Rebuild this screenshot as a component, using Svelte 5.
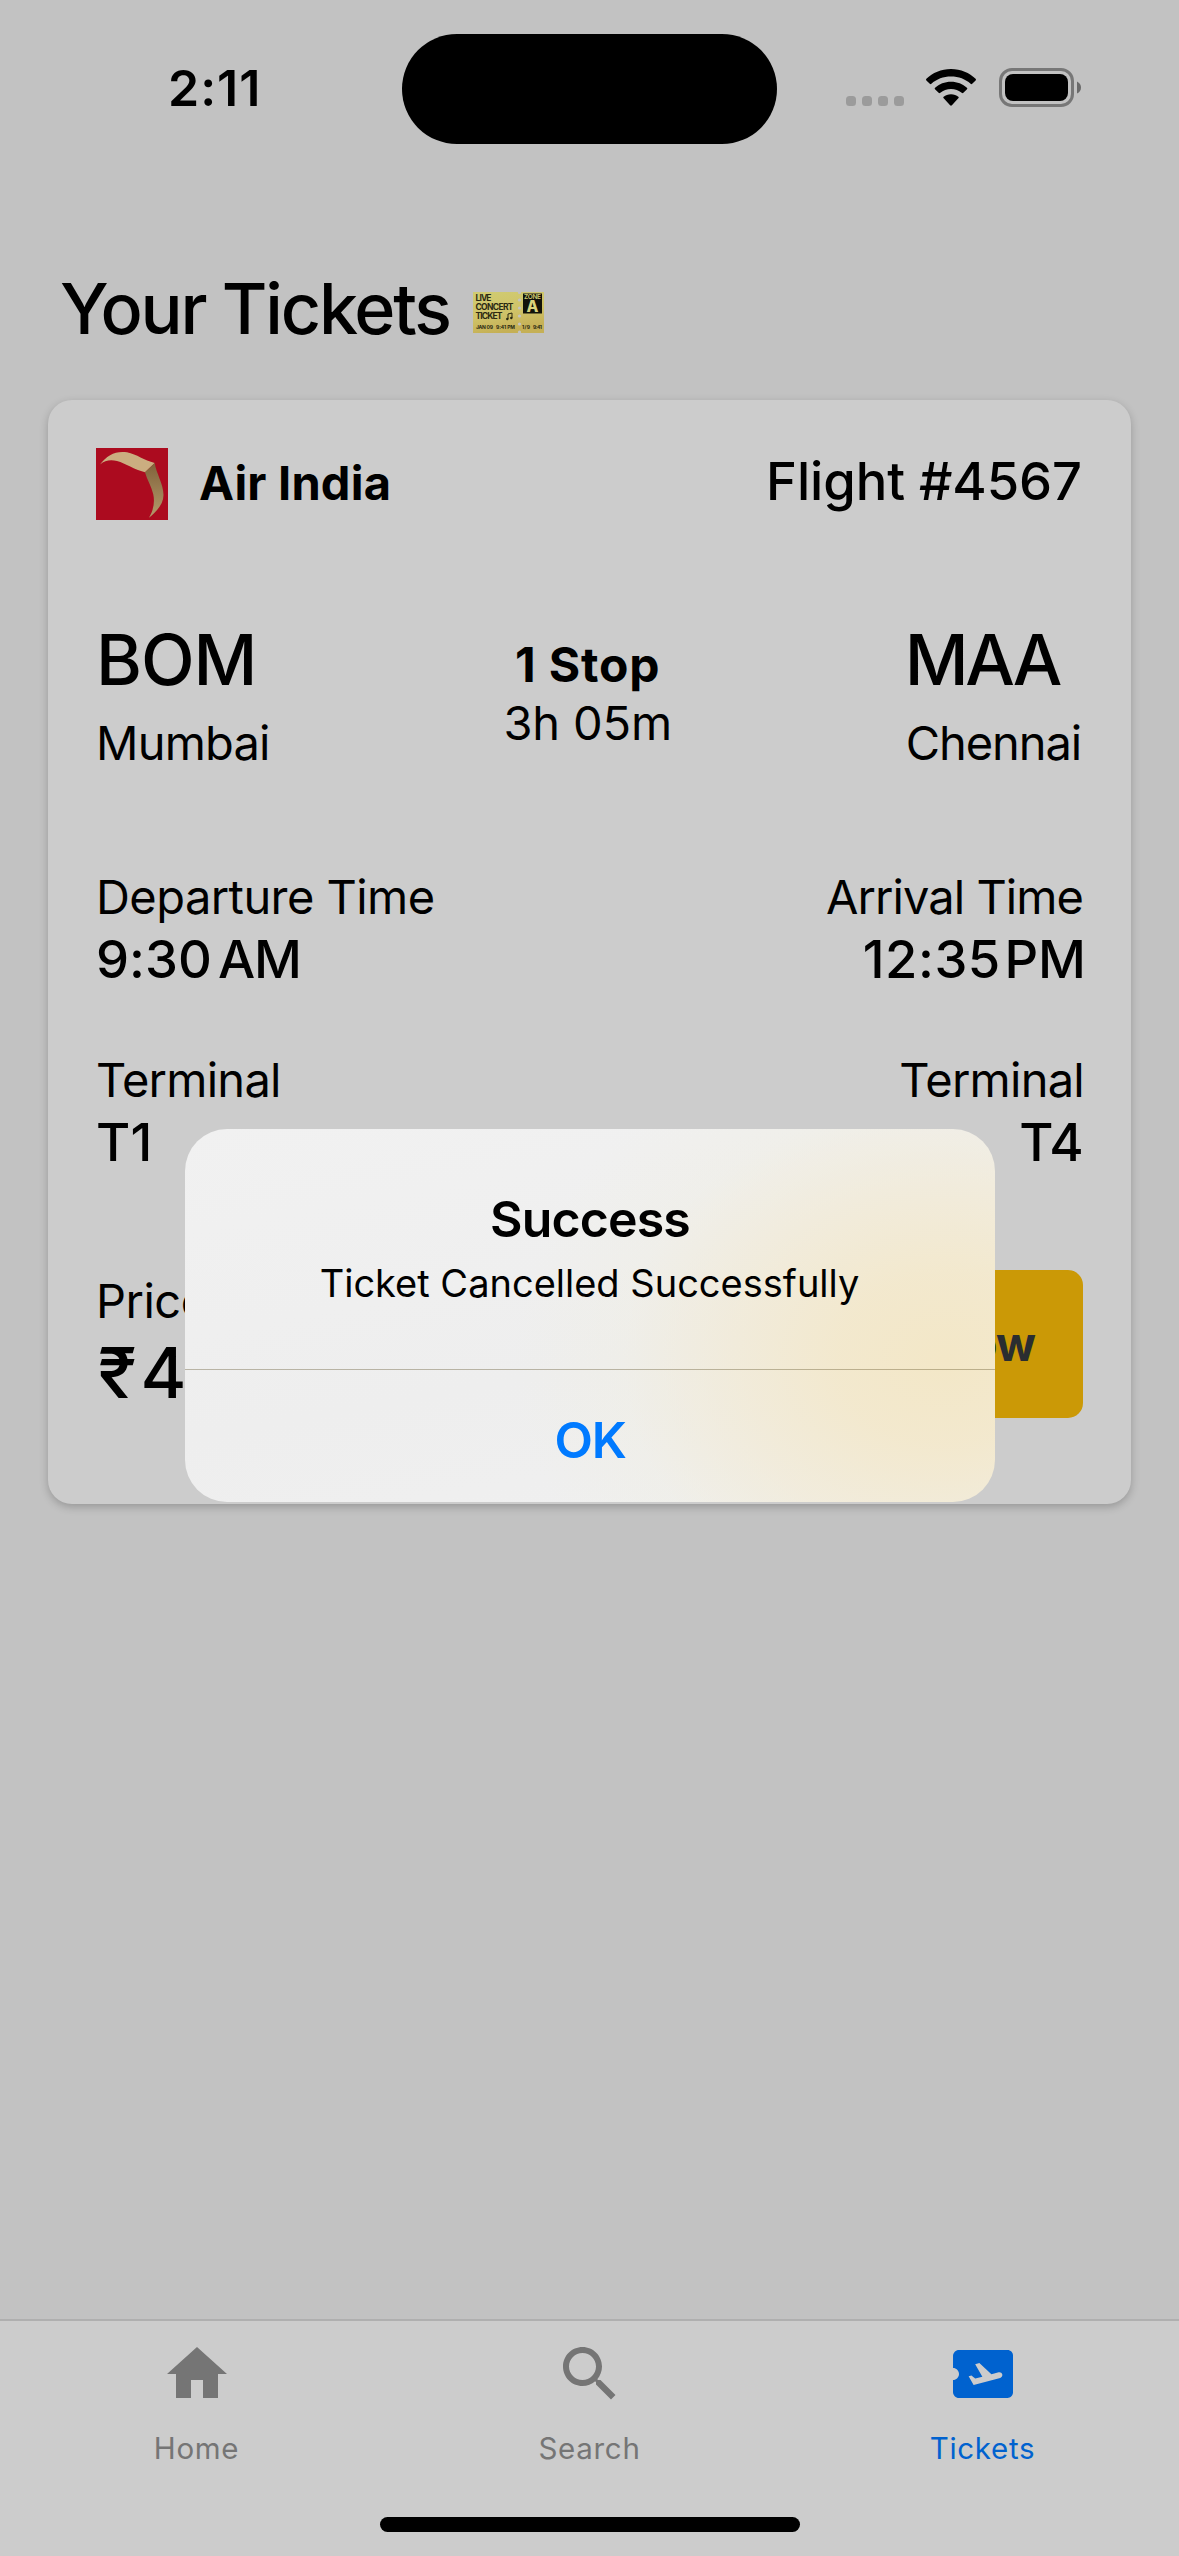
<script>
  const tabs = [
    {
      id: 'home',
      label: 'Home',
      path: 'M10 20v-6h4v6h5v-8h3L12 3 2 12h3v8z'
    },
    {
      id: 'search',
      label: 'Search',
      path: 'M15.5 14h-.79l-.28-.27C15.41 12.59 16 11.11 16 9.5 16 5.91 13.09 3 9.5 3S3 5.91 3 9.5 5.91 16 9.5 16c1.61 0 3.09-.59 4.23-1.57l.27.28v.79l5 4.99L20.49 19l-4.99-5zm-6 0C7.01 14 5 11.99 5 9.5S7.01 5 9.5 5 14 7.01 14 9.5 11.99 14 9.5 14z'
    },
    {
      id: 'tickets',
      label: 'Tickets',
      path: 'M20.19 4H4c-1.1 0-1.99.9-1.99 2v4c1.1 0 1.99.9 1.99 2s-.89 2-2 2v4c0 1.1.9 2 2 2h16.19c1 0 1.81-.82 1.81-1.82V5.82C22 4.82 21.19 4 20.19 4zM17.73 13.3l-8.86 2.36-1.66-2.88.93-.25 1.26.99 2.39-.64-2.4-4.16 1.4-.38 4.01 3.74 2.44-.65c.51-.14 1.04.17 1.18.68.13.51-.17 1.04-.69 1.19z'
    }
  ];
  let active = $state('tickets');
</script>

<div class="screen">
  <header class="status">
    <div class="clock">2:11</div>
    <div class="island"></div>
    <div class="indicators">
      <div class="dots"><i></i><i></i><i></i><i></i></div>
      <svg class="wifi" viewBox="0 0 50 37">
        <path d="M25 0C34.800 0 43.500 3.800 49.600 9.800Q50.400 10.600 49.600 11.400L46.200 14.800Q45.400 15.600 44.600 14.800C39.500 10 32.600 7.500 25 7.500S10.500 10 5.400 14.800Q4.600 15.600 3.800 14.800L.400 11.400Q-.400 10.600 .400 9.800C6.500 3.800 15.200 0 25 0Z" />
        <path d="M25 12.700C31.300 12.700 36.800 15 40.900 18.700Q41.800 19.500 41 20.300L37.400 23.800Q36.600 24.600 35.700 23.800C32.800 21.300 29.100 20 25 20S17.200 21.300 14.300 23.800Q13.400 24.600 12.600 23.800L9 20.300Q8.200 19.500 9.100 18.700C13.200 15 18.700 12.700 25 12.700Z" />
        <path d="M25 25.300C28 25.300 30.500 26.200 32.300 27.700Q33.100 28.400 32.300 29.200L25.900 36.300Q25 37.200 24.100 36.300L17.700 29.200Q16.900 28.400 17.700 27.700C19.500 26.200 22 25.300 25 25.300Z" />
      </svg>
      <svg class="battery" viewBox="0 0 82 39">
        <rect x="1.500" y="1.500" width="72" height="36" rx="11.500" fill="none" stroke="#777" stroke-width="3" />
        <rect x="6" y="6" width="63" height="27" rx="8" />
        <path d="M78 13.500Q82 15.500 82 19.500T78 25.500Z" fill="#6a6a6a" />
      </svg>
    </div>
  </header>

  <main>
    <h1>
      <span>Your Tickets</span>
      <svg class="emoji" viewBox="0 0 71 41">
        <defs>
          <linearGradient id="paper" x1="0" y1="0" x2="0.300" y2="1">
            <stop offset="0" stop-color="#d0cc72" />
            <stop offset="0.600" stop-color="#cfc268" />
            <stop offset="1" stop-color="#c5b056" />
          </linearGradient>
        </defs>
        <rect width="71" height="41" fill="url(#paper)" />
        <g fill="#c2c2c2">
          <circle cx="46.500" cy="0.500" r="1.600" /><circle cx="46.500" cy="8" r="1.600" />
          <circle cx="46.500" cy="16" r="1.600" /><circle cx="46.500" cy="24" r="1.600" />
          <circle cx="46.500" cy="32" r="1.600" /><circle cx="46.500" cy="40" r="1.600" />
        </g>
        <rect x="50" y="1.500" width="19" height="20" fill="#12120a" />
        <g class="print">
          <text x="2.500" y="8.800" textLength="16">LIVE</text>
          <text x="2.500" y="18" textLength="38">CONCERT</text>
          <text x="2.500" y="27.200" textLength="27">TICKET</text>
          <text class="fine" x="3" y="37" textLength="17">JAN 09</text>
          <text class="fine" x="23" y="37" textLength="19">9:41 PM</text>
          <text class="fine" x="49" y="37" textLength="8">1/9</text>
          <text class="fine" x="60" y="37" textLength="9">9:41</text>
        </g>
        <path d="M35 27V22l4-1v5" fill="none" stroke="#2a2912" />
        <circle cx="34.300" cy="27" r="1.200" fill="#2a2912" /><circle cx="38.300" cy="26" r="1.200" fill="#2a2912" />
        <text class="zone" x="51" y="7.300" textLength="17">ZONE</text>
        <text class="letter" x="59.500" y="19.800" text-anchor="middle">A</text>
      </svg>
    </h1>

    <article class="card">
      <div class="row airline">
        <div class="brand">
          <svg class="logo" viewBox="0 0 72 72">
            <defs>
              <linearGradient id="fold" x1="0" y1="0" x2="0" y2="1">
                <stop offset="0" stop-color="#80623a" />
                <stop offset="1" stop-color="#b59a6b" />
              </linearGradient>
            </defs>
            <rect width="72" height="72" fill="#ac0b1f" />
            <path d="M4 16.500C11 7 20 2.500 31 4.300C41 6.300 48 12.500 58.700 15L49 24.200C38 21.500 30 15.500 21 13C14 11.500 9 12.500 4 16.500Z" fill="#cbae80" />
            <path d="M58.700 15C60 25 67.500 36 67.500 47C67.500 56 61 63 53 69.800C57.500 62 59 54 57.200 46C55.500 38.500 51 31.500 49 24.200Z" fill="url(#fold)" />
          </svg>
          <strong class="name">Air India</strong>
        </div>
        <div class="flight">Flight #4567</div>
      </div>

      <div class="row route">
        <div>
          <div class="code bom">BOM</div>
          <div class="text mumbai">Mumbai</div>
        </div>
        <div class="stops">
          <strong class="stop">1 Stop</strong>
          <div class="text duration">3h 05m</div>
        </div>
        <div>
          <div class="code maa">MAA</div>
          <div class="text chennai">Chennai</div>
        </div>
      </div>

      <div class="row times">
        <div>
          <div class="text departure">Departure Time</div>
          <div class="value dep-value">9:30&#8201;<span class="am">AM</span></div>
        </div>
        <div class="end">
          <div class="text arrival">Arrival Time</div>
          <div class="value arr-value">12:35&#8201;<span class="pm">PM</span></div>
        </div>
      </div>

      <div class="row terminals">
        <div>
          <div class="text terminal">Terminal</div>
          <div class="value t1">T1</div>
        </div>
        <div class="end">
          <div class="text terminal">Terminal</div>
          <div class="value t4">T4</div>
        </div>
      </div>

      <div class="row checkout">
        <div>
          <div class="text price-label">Price</div>
          <div class="price">₹4500</div>
        </div>
        <button class="cancel">Cancel Now</button>
      </div>
    </article>
  </main>

  <nav>
    {#each tabs as tab (tab.id)}
      <button class="tab" class:active={active === tab.id} onclick={() => (active = tab.id)}>
        <svg viewBox="0 0 24 24"><path d={tab.path} /></svg>
        <span>{tab.label}</span>
      </button>
    {/each}
  </nav>
  <div class="home-bar"></div>

  <div class="alert" role="alertdialog" aria-labelledby="alert-title">
    <div class="message">
      <h2 id="alert-title">Success</h2>
      <p>Ticket Cancelled Successfully</p>
    </div>
    <button class="ok">OK</button>
  </div>
</div>

<style>
  :global(body) { margin: 0; background: #c2c2c2; }
  .screen {
    position: relative;
    display: flex;
    flex-direction: column;
    width: 1179px;
    height: 2556px;
    overflow: hidden;
    background: #c2c2c2;
    color: #000;
    font-family: Inter, "Liberation Sans", sans-serif;
    white-space: nowrap;
  }
  button { border: 0; padding: 0; background: none; font: inherit; }
  h1, h2, p { margin: 0; }
  svg { display: block; flex: none; }

  .status { display: grid; grid-template-columns: 402px 375px 402px; height: 177px; flex: none; }
  .clock { padding: 57.500px 0 0 168px; font-size: 50px; font-weight: 600; line-height: 60px; letter-spacing: 1px; }
  .island { height: 110px; margin-top: 34px; border-radius: 55px; background: #000; }
  .indicators { display: flex; align-items: flex-start; padding: 68px 0 0 69px; }
  .dots { display: flex; gap: 6px; margin-top: 28px; }
  .dots i { width: 10px; height: 10px; border-radius: 3.500px; background: #9b9b9b; }
  .wifi { width: 50px; height: 37px; margin: 1px 0 0 22px; }
  .battery { width: 82px; height: 39px; margin-left: 23px; }

  main { flex: 1; padding: 0 48px; }
  h1 {
    display: flex;
    align-items: flex-start;
    height: 84px;
    padding: 90px 0 49px 12px;
    font-size: 70px;
    font-weight: 500;
    line-height: 84px;
    letter-spacing: -2.200px;
  }
  .emoji { width: 71px; height: 41px; margin: 25px 0 0 23px; letter-spacing: 0; }
  .print text { font: 700 8.500px Inter, sans-serif; fill: #2a2912; }
  .print .fine { font-size: 5px; }
  .zone { font: 600 6.500px Inter, sans-serif; fill: #d0cc72; }
  .letter { font: 800 15.500px Inter, sans-serif; fill: #d9d27c; }

  .card {
    box-sizing: border-box;
    height: 1104px;
    padding: 48px;
    border-radius: 24px;
    background: #ccc;
    box-shadow: 0 3px 9px rgba(0, 0, 0, 0.220);
  }
  .row { display: flex; justify-content: space-between; }
  .airline { height: 72px; }
  .brand { display: flex; }
  .logo { width: 72px; height: 72px; margin-right: 31px; }
  .name { font-size: 47px; line-height: 70px; letter-spacing: 0.200px; }
  .flight { font-size: 52.500px; font-weight: 500; line-height: 66px; letter-spacing: -0.080px; margin-right: 1px; }

  .text { font-size: 47px; line-height: 58px; }
  .code { font-size: 70px; font-weight: 500; line-height: 84px; }
  .value { font-size: 52.500px; font-weight: 500; line-height: 66px; }
  .end { display: flex; flex-direction: column; align-items: flex-end; }

  .route { margin-top: 98px; height: 185px; }
  .bom { letter-spacing: -1.070px; }
  .maa { margin-left: -1px; letter-spacing: -3.270px; }
  .mumbai { margin-top: 12px; letter-spacing: -0.810px; }
  .chennai { margin: 12px 2px 0 0; letter-spacing: -1.080px; }
  .stops { display: flex; flex-direction: column; align-items: center; margin-top: 18px; }
  .stop { font-size: 48px; line-height: 58px; letter-spacing: 0.800px; }
  .duration { letter-spacing: -0.150px; }

  .times { margin-top: 65px; height: 128px; }
  .departure { letter-spacing: -0.560px; }
  .arrival { letter-spacing: -0.930px; }
  .dep-value { letter-spacing: 0.030px; }
  .am { margin-left: -3px; letter-spacing: -1.200px; }
  .arr-value { margin-right: -3px; letter-spacing: 0.510px; }
  .pm { margin-left: -6px; letter-spacing: 0; }

  .terminals { margin-top: 55px; height: 128px; }
  .terminal { letter-spacing: -0.740px; }
  .end .terminal { margin-right: -1px; }
  .t1 { letter-spacing: 0.200px; }
  .t4 { letter-spacing: -0.710px; }

  .checkout { margin-top: 91px; }
  .price-label { margin-top: 2px; letter-spacing: -0.500px; }
  .price { font-size: 70px; font-weight: 500; line-height: 84px; margin: 1px 0 0 2px; letter-spacing: 3.800px; }
  .cancel {
    width: 371px;
    height: 148px;
    padding-left: 10px;
    border-radius: 15px;
    background: #cb9906;
    color: #2a2d30;
    font-size: 47px;
    font-weight: 700;
    line-height: 148px;
    letter-spacing: -1px;
  }

  nav { display: flex; flex: none; box-sizing: border-box; height: 237px; border-top: 2px solid #afafaf; background: #ccc; }
  .tab { display: flex; flex: 1; flex-direction: column; align-items: center; padding-top: 17px; color: #757575; }
  .tab svg { width: 72px; height: 72px; fill: currentColor; }
  .tab span { margin-top: 20px; font-size: 29.500px; line-height: 36px; letter-spacing: 0.700px; }
  .tab.active { color: #0062cf; }
  .home-bar { position: absolute; left: 380px; bottom: 24px; width: 420px; height: 15px; border-radius: 7.500px; background: #000; }

  .alert {
    position: absolute;
    left: 185px;
    top: 1129px;
    width: 810px;
    height: 373px;
    display: flex;
    flex-direction: column;
    overflow: hidden;
    border-radius: 42px;
    background:
      radial-gradient(ellipse 430px 340px at 760px 230px, rgba(243, 231, 199, 1) 0%, rgba(243, 232, 203, 0.920) 25%, rgba(242, 234, 212, 0.720) 50%, rgba(240, 238, 226, 0.400) 75%, rgba(240, 240, 238, 0) 100%),
      linear-gradient(170deg, #f1f1f1, #eeeeee 60%, #f0f0f0);
    text-align: center;
  }
  .message { height: 240px; border-bottom: 1px solid rgba(70, 55, 10, 0.320); }
  h2 { padding-top: 60px; font-size: 50px; font-weight: 600; line-height: 60px; letter-spacing: -0.850px; }
  p { margin: 10px 1px 0 0; font-size: 38px; line-height: 48px; }
  .ok { flex: 1; padding-top: 7px; color: #007aff; font-size: 50px; font-weight: 600; letter-spacing: -1.300px; }
</style>
